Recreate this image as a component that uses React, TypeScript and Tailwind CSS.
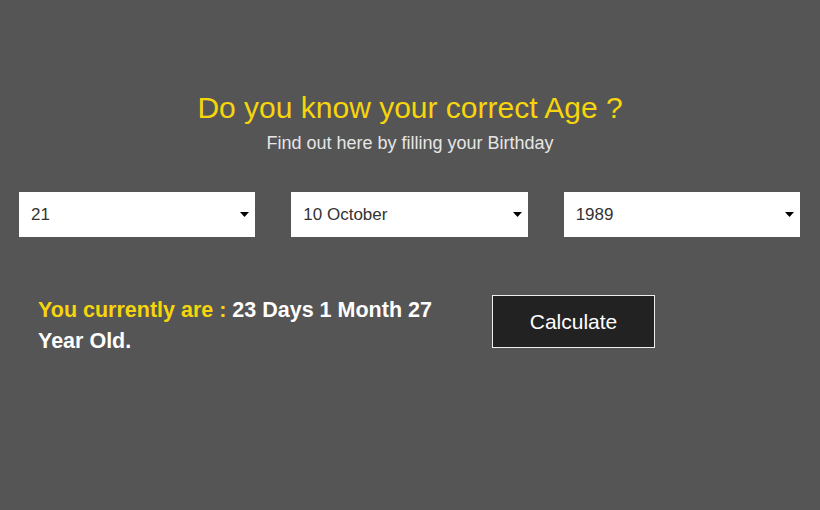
import React from "react";

function Select({ value }: { value: string }) {
  return (
    <div className="flex-1 h-[45px] bg-white flex items-center justify-between pl-[12px] pr-[6px] text-[17px] text-[#333]">
      <span>{value}</span>
      <svg width="9" height="5" viewBox="0 0 9 5"><path d="M0 0 L9 0 L4.5 5 Z" fill="#000" /></svg>
    </div>
  );
}

export default function App() {
  return (
    <div className="w-[820px] h-[510px] bg-[#555555] font-['Liberation_Sans',Arial,sans-serif] flex flex-col">
      <div className="pt-[90px] text-center">
        <h1 className="text-[30px] leading-[36px] text-[#f7d50c]">Do you know your correct Age ?</h1>
        <p className="text-[18px] leading-[22px] text-[#e6e6e6] mt-[6px]">Find out here by filling your Birthday</p>
      </div>
      <div className="flex gap-[36px] pl-[19px] pr-[20px] mt-[38px]">
        <Select value="21" />
        <Select value="10 October" />
        <Select value="1989" />
      </div>
      <div className="flex items-start mt-[58px] pl-[38px]">
        <p className="w-[420px] text-[21.5px] leading-[31px] font-bold text-white">
          <span className="text-[#f7d50c]">You currently are : </span>23 Days 1 Month 27 Year Old.
        </p>
        <button className="ml-[34px] w-[163px] h-[53px] bg-[#222222] border border-[#eeeeee] text-white text-[21px]">Calculate</button>
      </div>
    </div>
  );
}
